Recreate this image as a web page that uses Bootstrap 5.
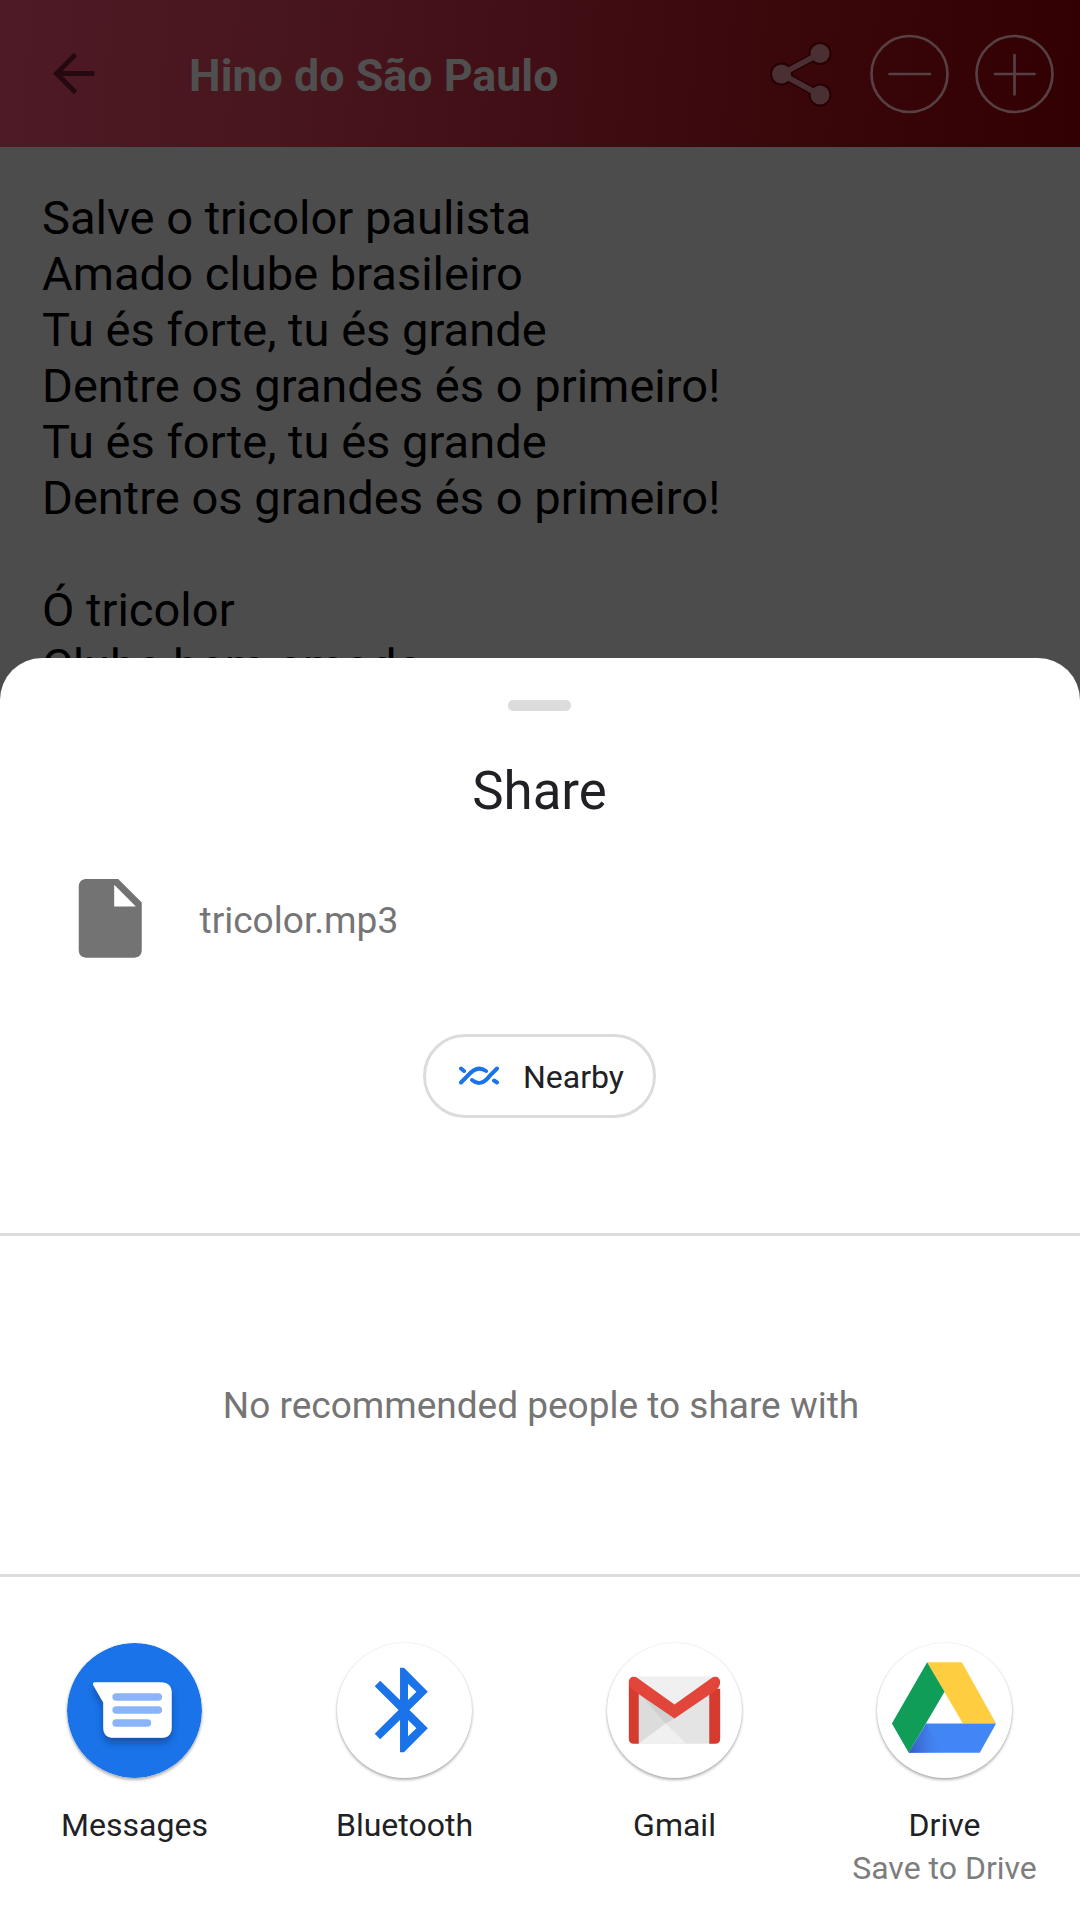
<!DOCTYPE html>
<html lang="pt-BR">
<head>
<meta charset="utf-8">
<meta name="viewport" content="width=device-width, initial-scale=1">
<title>Hino do São Paulo</title>
<link href="https://cdn.jsdelivr.net/npm/bootstrap@5.3.0/dist/css/bootstrap.min.css" rel="stylesheet">
<style>
  body { font-family: Roboto, sans-serif; background: #4c4c4c; height: 1920px; color: #202124; }
  .topbar { height: 147px; background: linear-gradient(95deg, #4e1a26 0%, #48161d 25%, #400d14 53%, #39060a 75%, #320003 100%); padding: 0 26px 0 47px; }
  .topbar-title { font-size: 44.8px; line-height: 52px; color: #4f4f4f; margin-left: 86px; padding-top: 4px; }
  .lyrics { font-size: 47.080px; line-height: 56px; color: #000; padding: 43px 42px 0; white-space: pre-line; }
  .share-sheet { background: #fff; border-radius: 42px 42px 0 0; height: 1262px; padding-top: 42px; }
  .grip { width: 63px; height: 11px; border-radius: 5px; background: #dcdcdc; margin-left: 508px; }
  .sheet-title { font-size: 52.8px; line-height: 62px; margin-top: 49px; padding-right: 1px; }
  .file-row { height: 95px; margin-top: 49px; padding-left: 63px; font-size: 37.1px; color: #757575; }
  .file-row span { margin-left: 42px; padding-top: 4px; }
  .nearby { width: 233px; height: 84px; border: 3px solid #dcdcdc; margin: 68px 0 115px 423px; font-size: 32px; color: #202124; padding: 0 0 0 33px; }
  .nearby span { margin-left: 24px; padding-top: 1px; }
  .rule-line { height: 3px; background: #dcdcdc; }
  .no-people { height: 338px; font-size: 37px; color: #757575; padding: 2px 0 0 2px; }
  .apps { padding-top: 66px; font-size: 32px; line-height: 37px; }
  .apps > div { padding-right: 1px; }
  .app-disc { width: 135px; height: 135px; border-radius: 50%; background: #fff; box-shadow: 0 2px 3px rgba(0,0,0,.3), 0 0 2px rgba(0,0,0,.1); display: block; }
  .app-name { margin-top: 29px; }
  .app-note { color: #7d7d7d; margin-top: 6px; }
</style>
</head>
<body class="overflow-hidden">
<header class="topbar d-flex align-items-center">
  <svg width="56" height="56" viewBox="47 46 56 56" fill="none" stroke="#240a10" stroke-width="4.800"><path d="M94.500 73.500H57M75.500 54.500L56.500 73.500L75.500 92.500"/></svg>
  <h1 class="topbar-title fw-bold mb-0">Hino do São Paulo</h1>
  <svg class="ms-auto" width="284" height="100" viewBox="770 23.500 284 100" fill="none">
    <g stroke="#260004" stroke-width="8.500"><path d="M820 53L781.500 73.500L820 94.500"/></g>
    <g fill="#260004"><circle cx="781.500" cy="73.500" r="11.500"/><circle cx="820" cy="53" r="11.500"/><circle cx="820" cy="94.500" r="11.500"/></g>
    <path d="M820 53L781.500 73.500L820 94.500" stroke="#4a3033" stroke-width="5.500"/>
    <g fill="#4a3033"><circle cx="781.500" cy="73.500" r="9.500"/><circle cx="820" cy="53" r="9.500"/><circle cx="820" cy="94.500" r="9.500"/></g>
    <g stroke="#564043" stroke-width="2.700" stroke-linecap="round"><circle cx="909.500" cy="73.500" r="38"/><path d="M889.500 73.500H930"/><circle cx="1014.500" cy="73.500" r="38"/><path d="M995 73.500H1034.500M1014.500 54.500V94"/></g>
  </svg>
</header>
<main class="lyrics">Salve o tricolor paulista
Amado clube brasileiro
Tu és forte, tu és grande
Dentre os grandes és o primeiro!
Tu és forte, tu és grande
Dentre os grandes és o primeiro!

Ó tricolor
Clube bem amado</main>
<section class="share-sheet position-absolute bottom-0 start-0 w-100">
  <div class="grip"></div>
  <h2 class="sheet-title text-center fw-normal mb-0">Share</h2>
  <div class="file-row d-flex align-items-center">
    <svg width="94.500" height="94.500" viewBox="0 0 24 24" fill="#737373"><path d="M6 2C4.900 2 4 2.600 4 4V20C4 21.300 4.700 22 6 22H18C19.300 22 20 21.300 20 20V8L14 2ZM13 9V3.500L18.500 9Z"/></svg>
    <span>tricolor.mp3</span>
  </div>
  <button class="nearby btn rounded-pill d-flex align-items-center">
    <svg width="40" height="20" viewBox="0 0 40 20" fill="none" stroke="#1a73e8" stroke-width="4" stroke-linecap="round"><path d="M2 16.500L9 9.500Q18-1.500 27 5M38 2.500L31 9.500Q22 21.500 13 14M2 2.500L5 5M35 14.500L38 16.500"/></svg>
    <span>Nearby</span>
  </button>
  <div class="rule-line"></div>
  <div class="no-people d-flex align-items-center justify-content-center">No recommended people to share with</div>
  <div class="rule-line"></div>
  <div class="apps row g-0 text-center">
    <div class="col-3">
      <svg class="app-disc mx-auto" viewBox="0 0 136 136"><defs><filter id="ds" x="-30%" y="-30%" width="160%" height="180%"><feDropShadow dx="0" dy="5" stdDeviation="4" flood-color="#0b3c8c" flood-opacity=".65"/></filter></defs><circle cx="68" cy="68" r="68" fill="#1a73e8"/><path filter="url(#ds)" fill="#fff" d="M28 39.500H94.500Q105.500 39.500 105.500 50.500V84.500Q105.500 95.500 94.500 95.500H47.500Q36.500 95.500 36.500 84.500V60L26.500 42.500Q25.500 39.500 28 39.500Z"/><path stroke="#8ab4f8" stroke-width="7.600" stroke-linecap="round" d="M49.500 54.500H92M49.500 67.500H92M49.500 80.500H81"/></svg>
      <div class="app-name">Messages</div>
    </div>
    <div class="col-3">
      <svg class="app-disc mx-auto" viewBox="0 0 136 136"><path fill="#1a73e8" fill-rule="evenodd" d="M63.500 25H67.500L91.500 49L73 67.500L91.500 86L67.500 110H63.500V77.500L43.500 97L38 91.500L62 67.500L38 43.500L43.500 38L63.500 57.500ZM71.500 41V57.500L80 49ZM71.500 77.500V94L80 86Z"/></svg>
      <div class="app-name">Bluetooth</div>
    </div>
    <div class="col-3">
      <svg class="app-disc mx-auto" viewBox="0 0 136 136"><path fill="#e4e4e4" d="M28 34H108V101.500H28Z"/><path fill="#f0f0f0" d="M28 34H108L68 62Z"/><path fill="#dcdcdc" d="M32 50L60 81L32 101Z"/><path fill="#d0d0d0" d="M32 50L68 76L59 81Z"/><path fill="#f0f0f0" d="M32 101.500L59 81L80 101.500Z"/><path fill="#d63b30" d="M22 39H32V101.500H27Q22 101.500 22 96.500ZM103 46H114V96.500Q114 101.500 109 101.500H103Z"/><path fill="#e2463a" d="M22 39.500C22 34 27 32.500 31 35.500L68 62L105 35.500C109 32.500 114 34 114 39.500C114 43 112 46 109 48L68 76L27 48C24 46 22 43 22 39.500Z"/></svg>
      <div class="app-name">Gmail</div>
    </div>
    <div class="col-3">
      <svg class="app-disc mx-auto" viewBox="0 0 136 136"><defs><linearGradient id="dg" x1="0" x2="1"><stop stop-color="#3457bd"/><stop offset="1" stop-color="#4285f4" stop-opacity="0"/></linearGradient></defs><path fill="#ffcd40" d="M50.500 19.500H85.500L120 81H86.500Z"/><path fill="#0f9d58" d="M50.500 19.500L68 49L32 110.500L15 81Z"/><path fill="#4285f4" d="M49.500 81H120L103.500 110.500H32Z"/><path fill="url(#dg)" d="M49.500 81L66 110.500H32Z"/></svg>
      <div class="app-name">Drive</div>
      <div class="app-note">Save to Drive</div>
    </div>
  </div>
</section>
<script src="https://cdn.jsdelivr.net/npm/bootstrap@5.3.0/dist/js/bootstrap.bundle.min.js"></script>
</body>
</html>
